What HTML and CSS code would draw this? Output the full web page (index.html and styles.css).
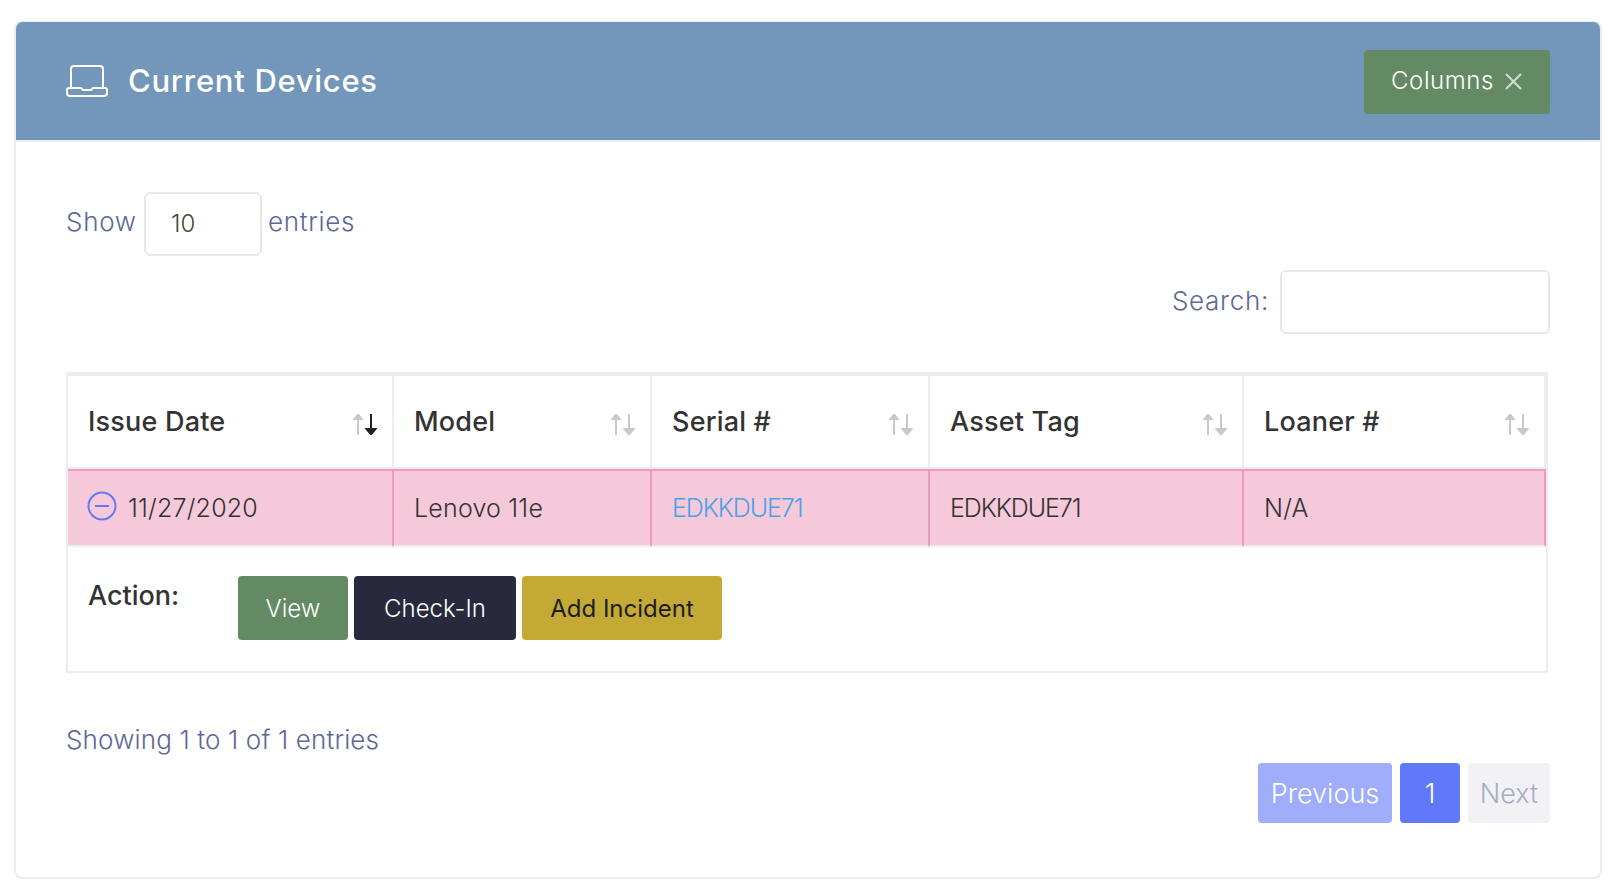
FILE: index.html
```html
<!DOCTYPE html>
<html lang="en">
<head>
    <meta charset="UTF-8">
    <title>Current Devices</title>
    <link rel="stylesheet" href="styles.css">
</head>
<body>
    <div class="card">
        <div class="card-header">
            <h1 class="card-title">
                <svg class="laptop-icon" viewBox="0 0 42 32" fill="none" stroke="#fff" stroke-width="2" stroke-linejoin="round">
                    <path d="M5 23V4a3 3 0 0 1 3-3h26a3 3 0 0 1 3 3v19"/>
                    <path d="M3 23h12l2 2h8l2-2h12a2 2 0 0 1 2 2v3a3 3 0 0 1-3 3H4a3 3 0 0 1-3-3v-3a2 2 0 0 1 2-2z"/>
                </svg>
                Current Devices
            </h1>
            <button class="btn btn-green btn-columns">
                Columns
                <svg class="close-icon" viewBox="0 0 17 17" stroke="#d3ddd3" stroke-width="2">
                    <path d="M1 1l15 15M16 1L1 16"/>
                </svg>
            </button>
        </div>

        <div class="card-body">
            <div class="length-row">
                <label class="muted show-label">Show</label>
                <div class="fake-input length-input">10</div>
                <label class="muted entries-label">entries</label>
            </div>
            <div class="search-row">
                <label class="muted search-label">Search:</label>
                <div class="fake-input search-input"></div>
            </div>

            <table class="devices">
                <colgroup>
                    <col class="col-date"><col class="col-model"><col class="col-serial"><col class="col-tag"><col class="col-loaner">
                </colgroup>
                <thead>
                    <tr>
                        <th>Issue Date
                            <svg class="sort-icon" viewBox="0 0 24 21"><path class="arrow-off" d="M5 21V4M1.5 5L5 .5 8.500 5z"/><path class="arrow-on" d="M18 0v17M13.500 15h9L18 20.500z"/></svg>
                        </th>
                        <th>Model
                            <svg class="sort-icon" viewBox="0 0 24 21"><path class="arrow-off" d="M5 21V4M1.5 5L5 .5 8.500 5z"/><path class="arrow-off" d="M18 0v17M13.500 15h9L18 20.500z"/></svg>
                        </th>
                        <th>Serial #
                            <svg class="sort-icon" viewBox="0 0 24 21"><path class="arrow-off" d="M5 21V4M1.5 5L5 .5 8.500 5z"/><path class="arrow-off" d="M18 0v17M13.500 15h9L18 20.500z"/></svg>
                        </th>
                        <th>Asset Tag
                            <svg class="sort-icon" viewBox="0 0 24 21"><path class="arrow-off" d="M5 21V4M1.5 5L5 .5 8.500 5z"/><path class="arrow-off" d="M18 0v17M13.500 15h9L18 20.500z"/></svg>
                        </th>
                        <th>Loaner #
                            <svg class="sort-icon" viewBox="0 0 24 21"><path class="arrow-off" d="M5 21V4M1.5 5L5 .5 8.500 5z"/><path class="arrow-off" d="M18 0v17M13.500 15h9L18 20.500z"/></svg>
                        </th>
                    </tr>
                </thead>
                <tbody>
                    <tr class="row-danger">
                        <td>
                            <div class="date-cell">
                                <svg class="minus-icon" viewBox="0 0 30 30" fill="none" stroke="#6078fa" stroke-width="2">
                                    <circle cx="15" cy="15" r="13.500"/>
                                    <path d="M8 15h14"/>
                                </svg>
                                11/27/2020
                            </div>
                        </td>
                        <td>Lenovo 11e</td>
                        <td><a class="serial-link" href="#">EDKKDUE71</a></td>
                        <td class="tight">EDKKDUE71</td>
                        <td>N/A</td>
                    </tr>
                    <tr class="row-detail">
                        <td colspan="5">
                            <div class="action-row">
                                <span class="action-label">Action:</span>
                                <button class="btn btn-green btn-view">View</button>
                                <button class="btn btn-dark btn-checkin">Check-In</button>
                                <button class="btn btn-yellow btn-incident">Add Incident</button>
                            </div>
                        </td>
                    </tr>
                </tbody>
            </table>

            <div class="table-info muted">Showing 1 to 1 of 1 entries</div>
            <div class="pager">
                <a class="page page-prev">Previous</a>
                <a class="page page-current">1</a>
                <a class="page page-next">Next</a>
            </div>
        </div>
    </div>
</body>
</html>
```

FILE: styles.css
```css
* {
    box-sizing: border-box;
    margin: 0;
    padding: 0;
}

body {
    font-family: 'Inter', 'Liberation Sans', sans-serif;
    font-weight: 300;
    background: #fff;
    color: #333;
}

.card {
    width: 1588px;
    height: 858px;
    margin: 21px 0 0 14px;
    border: 2px solid #ecedf3;
    border-top-width: 1px;
    border-radius: 8px;
    overflow: hidden;
}

.card-header {
    height: 120px;
    padding: 0 50px;
    display: flex;
    align-items: center;
    justify-content: space-between;
    background: #7396bb;
    border-bottom: 2px solid #ecedf3;
}

.card-title {
    display: flex;
    align-items: center;
    gap: 20px;
    margin-top: -1px;
    font-size: 31px;
    font-weight: 500;
    letter-spacing: 0.7px;
    color: #fff;
}

.laptop-icon {
    width: 42px;
    height: 32px;
}

.btn {
    height: 64px;
    border: none;
    border-radius: 4px;
    font-family: inherit;
    font-size: 24px;
    font-weight: 300;
    color: #fff;
}

.btn-green {
    background: #648a64;
}

.btn-dark {
    background: #29293d;
}

.btn-yellow {
    background: #c5a935;
    color: #1d1d1d;
    font-weight: 400;
}

.btn-columns {
    width: 186px;
    display: flex;
    align-items: center;
    gap: 11px;
    margin-top: 1px;
    padding: 0 0 2px 27px;
    letter-spacing: 0.6px;
}

.close-icon {
    width: 17px;
    height: 17px;
    margin-top: 2px;
}

.card-body {
    padding: 50px 50px 0;
}

.muted {
    color: #5e6797;
    font-size: 26px;
    font-weight: 300;
    letter-spacing: 0.7px;
}

.length-row {
    display: flex;
    align-items: center;
    height: 64px;
}

.show-label {
    width: 78px;
    margin-top: -6px;
}

.entries-label {
    margin-left: 6px;
    margin-top: -6px;
}

.fake-input {
    height: 64px;
    border: 2px solid #e7e7ee;
    border-radius: 6px;
    background: #fff;
}

.length-input {
    width: 118px;
    padding-left: 25px;
    line-height: 60px;
    font-size: 24px;
    color: #444;
}

.search-row {
    display: flex;
    align-items: center;
    justify-content: flex-end;
    gap: 11px;
    margin-top: 14px;
}

.search-input {
    width: 270px;
}

.search-label {
    margin-top: -4px;
}

.devices {
    width: 1482px;
    margin-top: 38px;
    table-layout: fixed;
    border-collapse: separate;
    border-spacing: 0;
    border: 2px solid #ecedf3;
    border-top-width: 4px;
}

.col-date { width: 326px; }
.col-model { width: 258px; }
.col-serial { width: 278px; }
.col-tag { width: 314px; }
.col-loaner { width: 302px; }

.devices th {
    position: relative;
    height: 93px;
    padding: 0 20px;
    border-right: 2px solid #ecedf3;
    border-bottom: 2px solid #ecedf3;
    text-align: left;
    font-size: 27px;
    font-weight: 500;
    letter-spacing: 0.2px;
}

.sort-icon {
    position: absolute;
    right: 15px;
    top: 38px;
    width: 24px;
    height: 21px;
}

.arrow-off {
    stroke: #c8c8c8;
    fill: #c8c8c8;
    stroke-width: 2;
}

.arrow-on {
    stroke: #222;
    fill: #222;
    stroke-width: 2;
}

.row-danger td {
    height: 78px;
    padding: 0 20px;
    background: #f5c9d9;
    border-top: 2px solid #f39ab8;
    border-right: 2px solid #f39ab8;
    border-bottom: 2px solid #ecedf3;
    font-size: 25px;
    letter-spacing: 0.2px;
}

.date-cell {
    display: flex;
    align-items: center;
    gap: 11px;
}

.minus-icon {
    width: 30px;
    height: 30px;
    margin: -4px 0 0 -1px;
}

.serial-link {
    color: #4aa3e6;
    text-decoration: none;
    letter-spacing: -1.1px;
}

.row-danger .tight {
    letter-spacing: -1.1px;
}

.row-detail td {
    padding: 29px 20px 31px;
}

.action-row {
    display: flex;
    gap: 6px;
}

.action-label {
    width: 144px;
    margin-top: 3px;
    font-size: 27px;
    font-weight: 500;
}

.btn-view { width: 110px; }
.btn-checkin { width: 162px; }
.btn-incident { width: 200px; }

.table-info {
    margin-top: 47px;
    line-height: 40px;
    letter-spacing: 0.15px;
}

.pager {
    display: flex;
    justify-content: flex-end;
    gap: 8px;
    margin-top: 3px;
}

.page {
    height: 60px;
    line-height: 62px;
    border-radius: 4px;
    text-align: center;
    font-size: 27px;
    font-weight: 300;
    color: #fff;
}

.page-prev {
    width: 134px;
    background: #9fadfb;
}

.page-current {
    width: 60px;
    background: #6078fa;
}

.page-next {
    width: 82px;
    background: #f2f1f6;
    color: #a9adc0;
}
```
